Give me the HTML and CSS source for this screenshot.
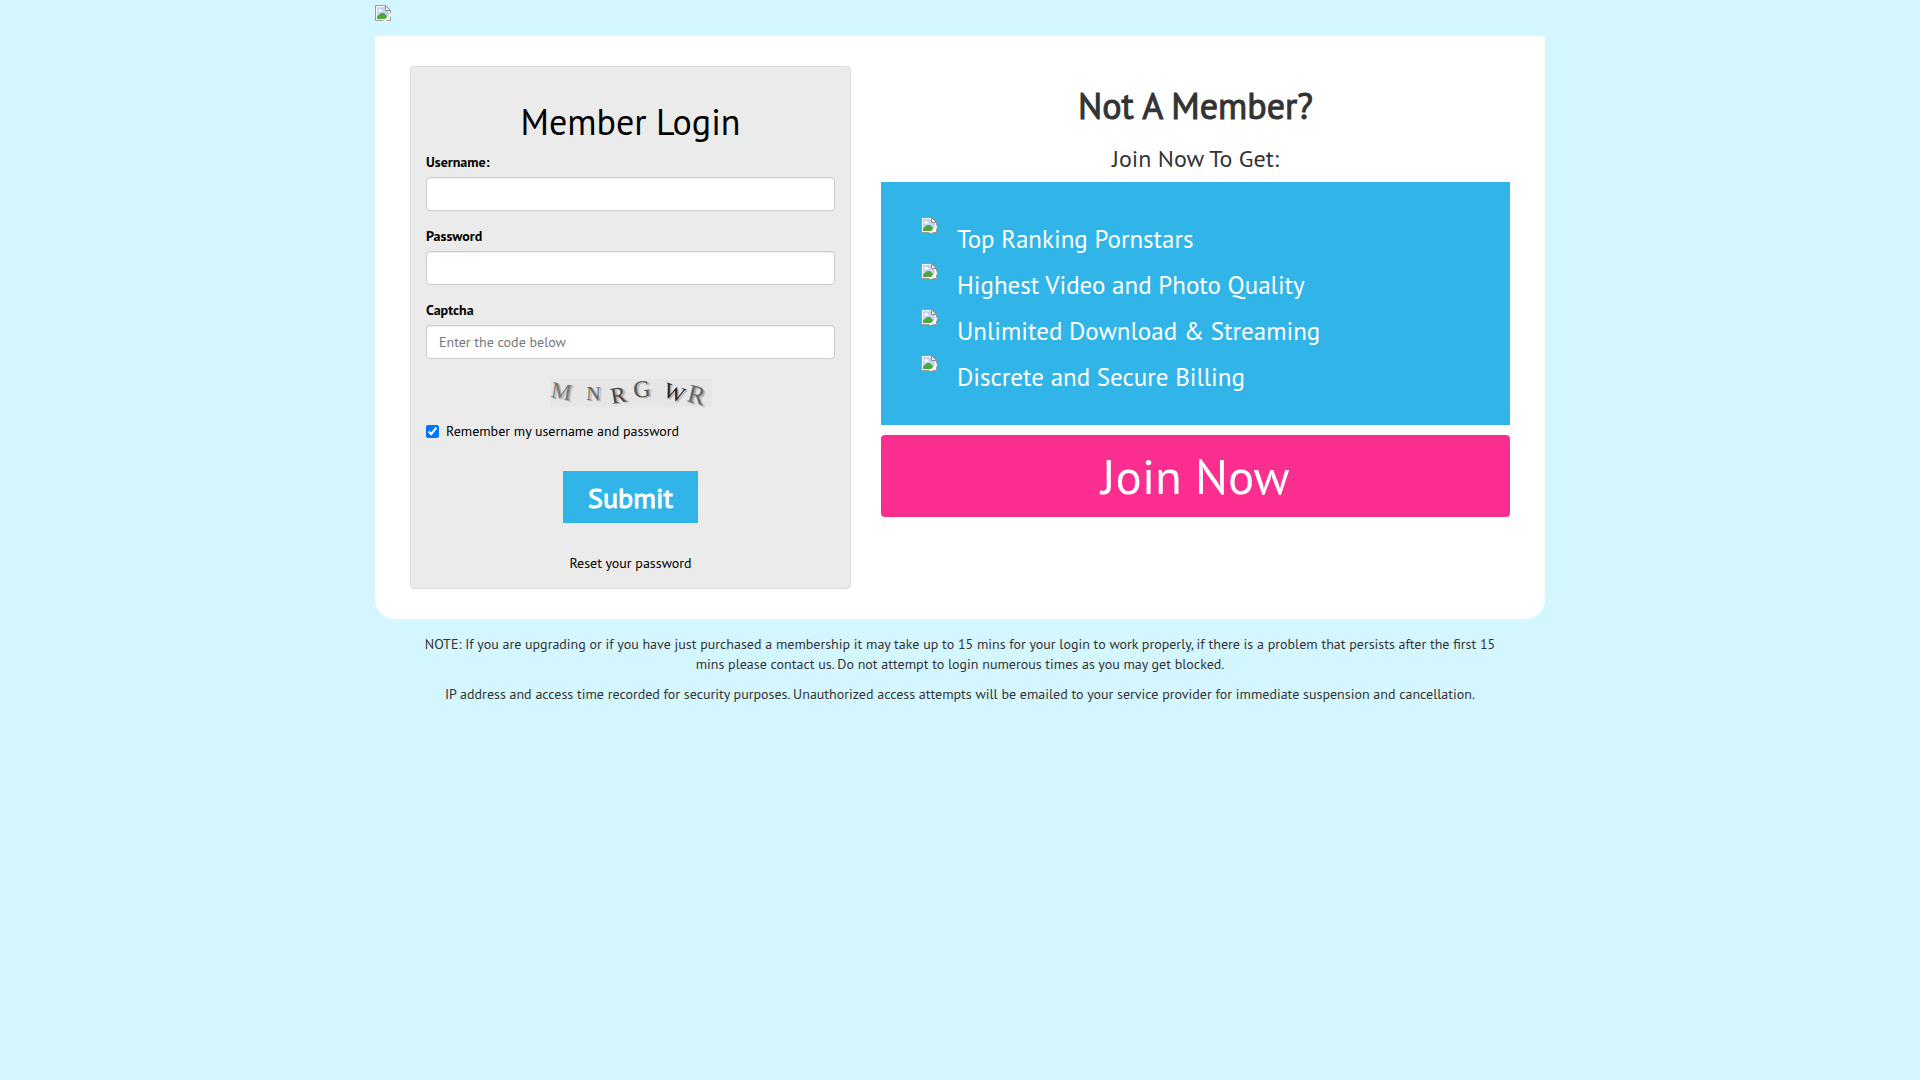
FILE: index.html
```
<!DOCTYPE html>
<html lang="en">
<head>
    <meta charset="UTF-8">
    <meta name="viewport" content="width=device-width, initial-scale=1">
    <title>Member Login</title>
    <link rel="stylesheet" href="styles.css">
</head>
<body>
    <svg width="0" height="0" class="sprite" aria-hidden="true">
        <symbol id="missing" viewBox="0 0 16 16">
            <path d="M.5 .5h10l5 5v10H.5z" fill="#fff" stroke="#9a9a9a"/>
            <path d="M2 2h8v4h4v8H2z" fill="#c3d5f6"/>
            <path d="M2 14v-2.500l4-3.500h3l3 3v3z" fill="#4fa63c"/>
            <path d="M3.500 5.500c0-1.500 2.500-2 3-.500 1.500 0 1.500 1.500.500 1.500h-3c-.500 0-1-.500-.500-1z" fill="#fff"/>
            <path d="M10.500 .5v5h5z" fill="#f5f5f5" stroke="#8a8a8a"/>
            <path d="M8 16l8-8v3l-5 5z" fill="#fff"/>
        </symbol>
    </svg>
    <div class="container">
        <header class="logo">
            <a href="#" aria-label="Home"><svg class="missing"><use href="#missing"/></svg></a>
        </header>
        <main class="content">
            <form class="well">
                <h1>Member Login</h1>
                <div class="form-group">
                    <label for="username">Username:</label>
                    <input type="text" class="form-control" id="username">
                </div>
                <div class="form-group">
                    <label for="password">Password</label>
                    <input type="password" class="form-control" id="password">
                </div>
                <div class="form-group">
                    <label for="captcha">Captcha</label>
                    <input type="text" class="form-control" id="captcha" placeholder="Enter the code below">
                </div>
                <svg class="captcha" width="162" height="28" viewBox="0 0 162 28">
                    <rect width="162" height="28" fill="#e6e6e6"/>
                    <text transform="translate(0 18) rotate(10)" font-size="23" fill="#777">M</text>
                    <text transform="translate(36 21) rotate(2)" font-size="20" fill="#666">N</text>
                    <text transform="translate(62 25) rotate(-10)" font-size="23" fill="#444">R</text>
                    <text transform="translate(84 19) rotate(-6)" font-size="24" fill="#555">G</text>
                    <text transform="translate(112 17) rotate(20)" font-size="22" fill="#222">W</text>
                    <text transform="translate(136 22) rotate(14)" font-size="26" fill="#666">R</text>
                </svg>
                <label class="checkbox"><input type="checkbox" checked>Remember my username and password</label>
                <button type="submit" class="submit">Submit</button>
                <a href="#" class="reset">Reset your password</a>
            </form>
            <section class="join">
                <h2>Not A Member?</h2>
                <h3>Join Now To Get:</h3>
                <ul class="benefits">
                    <li><svg class="missing"><use href="#missing"/></svg>Top Ranking Pornstars</li>
                    <li><svg class="missing"><use href="#missing"/></svg>Highest Video and Photo Quality</li>
                    <li><svg class="missing"><use href="#missing"/></svg>Unlimited Download &amp; Streaming</li>
                    <li><svg class="missing"><use href="#missing"/></svg>Discrete and Secure Billing</li>
                </ul>
                <a href="#" class="join-button">Join Now</a>
            </section>
        </main>
        <footer class="notes">
            <p>NOTE: If you are upgrading or if you have just purchased a membership it may take up to 15 mins for your login to work properly, if there is a problem that persists after the first 15 mins please contact us. Do not attempt to login numerous times as you may get blocked.</p>
            <p>IP address and access time recorded for security purposes. Unauthorized access attempts will be emailed to your service provider for immediate suspension and cancellation.</p>
        </footer>
    </div>
</body>
</html>
```
FILE: styles.css
```
* {
    box-sizing: border-box;
}
body {
    margin: 0;
    background: #d4f6ff;
    color: #333;
    font-family: "PT Sans", Lato, "Noto Sans", sans-serif;
    font-size: 14px;
    line-height: 20px;
}
h1, h2, h3, p, ul {
    margin: 0;
}
.sprite {
    position: absolute;
}
.container {
    max-width: 1170px;
    margin: 0 auto;
}
.logo {
    padding: 5px 0 15px;
}
.logo a {
    display: block;
    height: 16px;
}
.missing {
    display: block;
    width: 16px;
    height: 16px;
}
.content {
    display: grid;
    grid-template-columns: 441fr 629fr;
    gap: 30px;
    padding: 30px 35px;
    background: #fff;
    border-radius: 0 0 20px 20px;
}
.well {
    display: flex;
    flex-direction: column;
    padding: 35px 15px 15px;
    background: #ebebeb;
    border: 1px solid #dcdcdc;
    border-radius: 4px;
    color: #000;
}
.well h1 {
    font-size: 36px;
    font-weight: normal;
    line-height: 40px;
    margin-bottom: 10px;
    text-align: center;
}
.form-group {
    margin-bottom: 15px;
}
.form-group label {
    display: block;
    margin-bottom: 5px;
    font-weight: bold;
}
.form-control {
    display: block;
    width: 100%;
    height: 34px;
    padding: 6px 12px;
    border: 1px solid #ccc;
    border-radius: 4px;
    background: #fff;
    box-shadow: inset 0 1px 1px rgba(0, 0, 0, 0.075);
    font: inherit;
}
.form-control::placeholder {
    color: #777;
}
.captcha {
    align-self: center;
    margin: 5px 0 14px;
    overflow: visible;
}
.captcha text {
    font-family: "Liberation Serif", serif;
    text-shadow: 2px 1px 1px #aaa;
}
.checkbox {
    display: flex;
    align-items: center;
    gap: 7px;
    margin-bottom: 30px;
}
.checkbox input {
    width: 13px;
    height: 13px;
    margin: 0;
}
.submit {
    align-self: center;
    height: 52px;
    margin-bottom: 30px;
    padding: 0 25px;
    border: 0;
    background: #31b5e8;
    color: #fff;
    font-family: inherit;
    font-size: 28px;
    -webkit-text-stroke: 1px;
}
.reset {
    align-self: center;
    color: #000;
    text-decoration: none;
}
.join {
    text-align: center;
}
.join h2 {
    padding-top: 20px;
    font-size: 36px;
    font-weight: normal;
    line-height: 40px;
    -webkit-text-stroke: 1px;
}
.join h3 {
    margin: 20px 0 10px;
    font-size: 24px;
    font-weight: normal;
    line-height: 26px;
}
.benefits {
    display: grid;
    gap: 2px;
    padding: 35px 40px 26px;
    background: #31b5e8;
    color: #fff;
    font-size: 25px;
    line-height: 44px;
    list-style: none;
    text-align: left;
}
.benefits li {
    display: flex;
    gap: 20px;
}
.join-button {
    display: block;
    margin-top: 10px;
    border-radius: 4px;
    background: #f92e8f;
    color: #fff;
    font-size: 49px;
    line-height: 82px;
    text-decoration: none;
}
.notes {
    padding: 15px 40px;
    text-align: center;
}
.notes p {
    margin-bottom: 10px;
}
```
